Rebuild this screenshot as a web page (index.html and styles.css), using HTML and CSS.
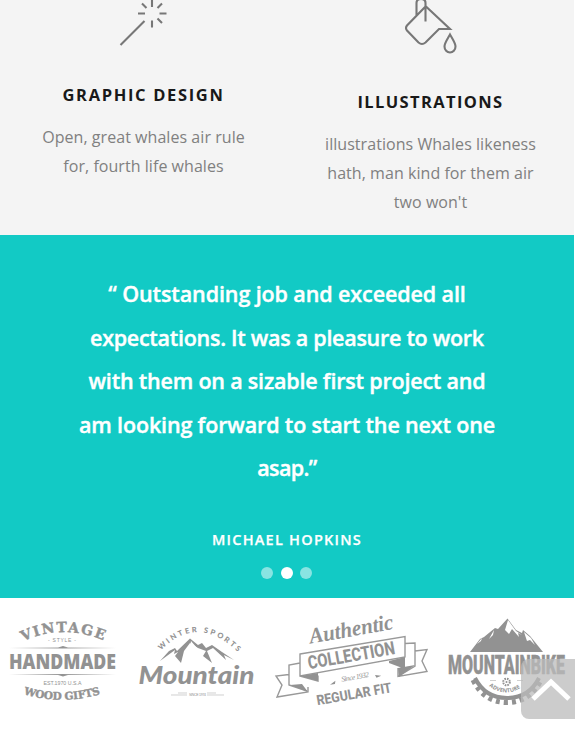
FILE: index.html
```html
<!DOCTYPE html>
<html lang="en">
<head>
<meta charset="utf-8">
<title>Services</title>
<link rel="stylesheet" href="styles.css">
</head>
<body>
<section class="services">
  <article class="service">
    <svg class="icon" viewBox="114 0 60 54"><path d="M120.500 45 144.500 21M152 0V7M152 20.500V27.500M138 13.500H145M159.500 13.500H166.500M142 3.500 146.500 8M162 3.500 157.500 8M157.500 18.500 162 23"/></svg>
    <h3>GRAPHIC DESIGN</h3>
    <p><span class="s1">Open, great whales air rule</span><span class="s2">for, fourth life whales</span></p>
  </article>
  <article class="service lower">
    <svg class="icon" viewBox="400.5 0 60 54"><path d="M416 16V3Q416-1 420.500-1T425 3V21.500M425.500 6 406.500 25.500Q404.500 28 406.500 30.500L418 42.500Q421.500 45.500 425 42.500L438.500 29H449.500L425.500 6.500M449.500 34.500C447 39 444 43 444 46.500C444 50 446.500 52.500 449.500 52.500S455 50 455 46.500C455 43 452 39 449.500 34.500Z"/></svg>
    <h3 class="ill">ILLUSTRATIONS</h3>
    <p><span class="s3">illustrations Whales likeness</span><span class="s4">hath, man kind for them air</span><span class="s5">two won't</span></p>
  </article>
</section>
<section class="testimonial">
  <blockquote><span class="q1">“ Outstanding job and exceeded all</span><span class="q2">expectations. It was a pleasure to work</span><span class="q3">with them on a sizable first project and</span><span class="q4">am looking forward to start the next one</span><span class="q5">asap.”</span></blockquote>
  <h4>MICHAEL HOPKINS</h4>
  <div class="dots"><i></i><i class="on"></i><i></i></div>
</section>
<section class="brands">
  <svg class="b1" viewBox="0 598 130 137">
    <defs>
      <path id="va" d="M23 641.500Q63 622.500 106 641.500"/><path id="vb" d="M23.500 694Q62 706 104 693"/>
      <linearGradient id="fade"><stop offset="0" stop-color="#929292" stop-opacity="0"/><stop offset=".5" stop-color="#929292"/><stop offset="1" stop-color="#929292" stop-opacity="0"/></linearGradient>
    </defs>
    <text class="slab" font-size="14"><textPath href="#va" textLength="83">VINTAGE</textPath></text>
    <text class="tiny" x="48" y="642" font-size="5" textLength="28">- STYLE -</text>
    <path fill="url(#fade)" d="M9 647.500H58L63 646 68 647.500H116V648.500H9ZM9 674H116V675H68L63 676.500 58 675H9Z"/>
    <text class="hand" x="9" y="668.500" font-size="20.500" textLength="107" lengthAdjust="spacingAndGlyphs">HANDMADE</text>
    <text class="tiny" x="43.500" y="685" font-size="5" textLength="38" lengthAdjust="spacingAndGlyphs">EST.1970 U.S.A</text>
    <text class="slab" font-size="10.500"><textPath href="#vb" textLength="78">WOOD GIFTS</textPath></text>
  </svg>
  <svg class="b2" viewBox="130 598 135 137">
    <defs><path id="wa" d="M161 650.500Q198 612 240 654"/></defs>
    <text class="sport" font-size="7.500"><textPath href="#wa" textLength="88">WINTER SPORTS</textPath></text>
    <path class="g" d="M160 661 169 651 175 648 177 651 190 638.500 198 645 202 643 206 648 212 645 222 652 234 660 224 655 226 660 213 648 207 651 212 663 203 656 206 651 198 648 190 643 184 651 181 663 175 656 178 652 174 654 175 650Z"/>
    <path class="w" d="M191 641 197 648 202 652 198 657 193 653 187 657 190 647Z"/>
    <text class="script" x="138.500" y="684" font-size="25" textLength="116" lengthAdjust="spacingAndGlyphs">Mountain</text>
    <path class="hair" d="M171 695H187M207 695H224M178 693H187M207 693H216"/>
    <text class="tiny" x="189" y="696" font-size="3.500" textLength="17">SINCE 1974</text>
  </svg>
  <svg class="b3" viewBox="265 598 173 137">
    <path class="line" d="M300 654 405 636.500 405 657 300 676ZM300 663 289 665V685L307 691M300 676 318 681 318 675.500M289 674.500 276 676 282 685 277 697 308 692V687M405 643.500 415 643V666L398 676.500M415 651 427 649.500 422 661 427 671.500 398 676.500V668"/>
    <path class="g" d="M300 676 318 673V681ZM290 685 302 684 308 692ZM389 661 405 657V669L389 663ZM398 668 415 665 399 677Z"/>
    <g transform="rotate(-10 350 660)">
      <text class="auth" x="314" y="637" font-size="22" textLength="85" lengthAdjust="spacingAndGlyphs">Authentic</text>
      <text class="cond" x="308" y="662" font-size="18.500" textLength="88" lengthAdjust="spacingAndGlyphs">COLLECTION</text>
      <text class="auth thin" x="338" y="680" font-size="7.500" textLength="28">Since 1932</text>
      <path class="g" d="M326 681 332 678 331 681ZM372 679 378 681 373 682Z"/>
      <text class="cond" x="310" y="699" font-size="14" textLength="76" lengthAdjust="spacingAndGlyphs">REGULAR FIT</text>
    </g>
  </svg>
  <svg class="b4" viewBox="438 598 137 137">
    <defs><path id="ad" d="M489 686Q506 699 523 686"/></defs>
    <path class="g" d="M470 652 480 639 484 637 495 628 498 629 507.500 618.500 516 630 522 633 523 630 530 636 543 652Z"/>
    <path class="w" d="M508 620 516 631 522 635 518 633 519 637 512 629 509 634 505 630ZM494 630 489 639 493 635ZM482 638 477 644 481 641ZM524 632 531 638 535 645 530 640 527 641Z"/>
    <text class="bike" x="448" y="674" font-size="26" textLength="117" lengthAdjust="spacingAndGlyphs">MOUNTAINBIKE</text>
    <path class="gear" d="M475 678Q485 698 507 698T539 678"/>
    <path class="teeth" d="M473 680Q484 702.500 507 702.500T541 680"/>
    <circle class="cog" cx="506.500" cy="682" r="3.300"/><circle class="g" cx="506.500" cy="682" r="1"/>
    <path class="hair" d="M490 680.500H496M517 680.500H523"/>
    <text class="adv" font-size="5.500"><textPath href="#ad" textLength="34">ADVENTURE</textPath></text>
  </svg>
</section>
<a class="top" href="#" aria-label="Back to top"><svg viewBox="521 659 54 60"><path d="M533 699 551 682 569 699"/></svg></a>
</body>
</html>
```
FILE: styles.css
```css
* { box-sizing: border-box; }
body { margin: 0; width: 575px; height: 735px; overflow: hidden; background: #fff; font-family: "Open Sans", "Noto Sans", sans-serif; }
.services { display: grid; grid-template-columns: 287px 287px; width: 574px; height: 235px; background: #f4f4f4; text-align: center; }
.service { display: flex; flex-direction: column; align-items: center; }
.icon { width: 60px; height: 54px; fill: none; stroke: #777; stroke-width: 2.1; }
h3 { margin: 29px 0 0; font-size: 16.5px; line-height: 24px; letter-spacing: 1.65px; color: #191919; font-weight: 700; }
.lower h3 { margin-top: 36px; letter-spacing: 1.38px; }
.service p { margin: 16px 0 0; font-size: 16px; line-height: 29px; letter-spacing: .05px; color: #808080; }
p span, blockquote span { display: block; white-space: nowrap; }
.testimonial { width: 574px; height: 363px; padding-top: 37px; display: flex; flex-direction: column; align-items: center; background: #12cac5; color: #fff; text-align: center; }
blockquote { margin: 0; font-size: 21.5px; line-height: 43.6px; font-weight: 600; -webkit-text-stroke: .4px #fff; }
.q1 { letter-spacing: -.1px; }
.q2 { letter-spacing: -.28px; }
.q3 { letter-spacing: -.2px; }
.q4 { letter-spacing: -.15px; }
.q5 { letter-spacing: -.6px; }
h4 { margin: 39px 0 0; font-size: 14.5px; line-height: 22px; letter-spacing: 1.25px; font-weight: 600; -webkit-text-stroke: .25px #fff; }
.dots { display: flex; gap: 7.5px; margin-top: 16px; margin-right: 1px; }
.dots i { width: 12px; height: 12px; border-radius: 50%; background: #88e4e2; }
.dots .on { background: #fff; }
.brands { display: flex; height: 137px; }
.brands svg { height: 137px; fill: #929292; }
.b1 { width: 130px; }
.b2 { width: 135px; }
.b3 { width: 173px; }
.b4 { width: 137px; }
.g { fill: #929292; }
.brands .w { fill: #fff; }
.slab { font-family: "DejaVu Serif", serif; font-weight: 700; stroke: #929292; stroke-width: .4; }
.tiny { font-family: "Liberation Sans", sans-serif; }
.hand { font-family: "Open Sans", sans-serif; font-weight: 800; }
.sport { font-family: Lato, sans-serif; font-weight: 900; }
.script { font-family: Lato, sans-serif; font-weight: 900; font-style: italic; }
.auth { font-family: "Liberation Serif", serif; font-style: italic; font-weight: 700; }
.thin { font-weight: 400; }
.cond, .bike { font-family: Roboto, sans-serif; font-weight: 800; }
.bike { font-weight: 900; stroke: #929292; stroke-width: .4; }
.line { fill: none; stroke: #999; stroke-width: 1.4; }
.hair { fill: none; stroke: #bbb; stroke-width: .7; }
.gear { fill: none; stroke: #929292; stroke-width: 4; }
.teeth { fill: none; stroke: #929292; stroke-width: 5; stroke-dasharray: 4 4; }
.cog { fill: none; stroke: #929292; stroke-width: 2; stroke-dasharray: 1.6 1; }
.adv { font-family: "Open Sans", sans-serif; font-weight: 700; }
.top { position: fixed; left: 521px; top: 659px; width: 54px; height: 60px; border-radius: 8px 0 0 8px; background: rgba(187,187,187,.75); }
.top svg { display: block; width: 54px; height: 60px; fill: none; stroke: #fff; stroke-width: 5; }
```
